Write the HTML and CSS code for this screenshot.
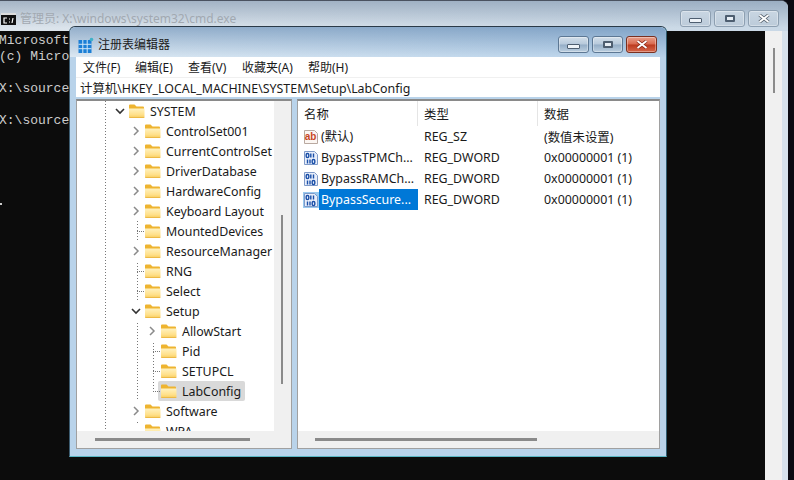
FILE: index.html
```html
<!DOCTYPE html>
<html lang="zh-CN">
<head>
<meta charset="utf-8">
<title>注册表编辑器</title>
<link rel="stylesheet" href="styles.css">
</head>
<body>
<svg class="defs" width="0" height="0" aria-hidden="true">
  <defs>
    <linearGradient id="fb" x1="0" y1="0" x2="0" y2="1">
      <stop offset="0" stop-color="#fff2c0"/>
      <stop offset=".65" stop-color="#ffe08a"/>
      <stop offset="1" stop-color="#f7cb5c"/>
    </linearGradient>
    <symbol id="folder" viewBox="0 0 17 16">
      <path d="M1 2.500q0-1 1-1h4.500l2 2h6.500q1 0 1 1V6H1z" fill="#eeb430"/>
      <path d="M1 5.500h15.500v8.500q0 1-1 1H2q-1 0-1-1z" fill="url(#fb)"/>
      <path d="M1 14.200h15.500v.1q0 .7-1 .7H2q-1 0-1-.7z" fill="#e9b33c"/>
    </symbol>
    <symbol id="chev-r" viewBox="0 0 16 20"><path d="M6 6l4 4-4 4" fill="none" stroke="#8a8a8a" stroke-width="1.500"/></symbol>
    <symbol id="chev-d" viewBox="0 0 16 20"><path d="M4 8l4 4 4-4" fill="none" stroke="#333" stroke-width="1.600"/></symbol>
    <symbol id="bin" viewBox="0 0 16 16">
      <path d="M1.500 1.500h10l3 3v10h-13z" fill="#e8eefa" stroke="#7f9ac8"/>
      <g fill="none" stroke="#1a4fa8" stroke-width="1.400">
        <rect x="3.200" y="3.500" width="2.600" height="4" rx="1.200"/>
        <path d="M7.800 3.500v4"/>
        <path d="M10.500 3.500v4"/>
        <path d="M4.500 9.500v4"/>
        <path d="M7 9.500v4"/>
        <rect x="9.200" y="9.500" width="2.600" height="4" rx="1.200"/>
      </g>
    </symbol>
  </defs>
</svg>

<section class="cmd">
  <header class="cmd-title">
    <svg class="cmd-icon" viewBox="0 0 15 12" width="15" height="12"><rect width="15" height="12" fill="#111"/><rect width="15" height="2" fill="#ddd"/><path d="M6 5H3v5h3M8 6h1M8 9h1M12 5l-1 5" fill="none" stroke="#fff" stroke-width="1.200"/></svg>
    <span class="cmd-caption">管理员: X:\windows\system32\cmd.exe</span>
    <div class="caps caps-cmd">
      <span class="cap"><i class="g-min"></i></span>
      <span class="cap"><i class="g-max"></i></span>
      <span class="cap"><svg class="g-x" viewBox="0 0 12 9" width="12" height="9"><path d="M1.500 1l9 7M10.500 1l-9 7" stroke="#55606c" stroke-width="3.400"/><path d="M1.500 1l9 7M10.500 1l-9 7" stroke="#fff" stroke-width="1.800"/></svg></span>
    </div>
  </header>
  <div class="cmd-body">
    <div class="console-wrap">
      <pre class="console">Microsoft
(c) Micro

X:\source

X:\source</pre>
      <i class="cursor"></i>
    </div>
    <div class="cmd-scroll"><span class="cmd-thumb"></span></div>
  </div>
</section>

<section class="reg">
  <header class="reg-title">
    <svg class="reg-icon" viewBox="0 0 16 16" width="16" height="16">
      <rect x="0.500" y="3" width="13" height="13" fill="#1b7fd6"/>
      <path d="M4.800 3v13M9.200 3v13M.5 7.300h13M.5 11.700h13" stroke="#cfe6f8" stroke-width="1"/>
      <circle cx="13.500" cy="2.500" r="1.800" fill="#3fb0c8"/>
    </svg>
    <span class="reg-caption">注册表编辑器</span>
    <div class="caps">
      <span class="cap"><i class="g-min"></i></span>
      <span class="cap"><i class="g-max"></i></span>
      <span class="cap cap-close"><svg class="g-x" viewBox="0 0 12 9" width="12" height="9"><path d="M1.500 1l9 7M10.500 1l-9 7" stroke="#8a2a18" stroke-width="3.400"/><path d="M1.500 1l9 7M10.500 1l-9 7" stroke="#fff" stroke-width="1.800"/></svg></span>
    </div>
  </header>
  <nav class="menu">
    <span class="m1">文件(F)</span><span class="m2">编辑(E)</span><span class="m3">查看(V)</span><span class="m4">收藏夹(A)</span><span>帮助(H)</span>
  </nav>
  <div class="address">计算机\HKEY_LOCAL_MACHINE\SYSTEM\Setup\LabConfig</div>
  <div class="panes">
    <div class="pane tree-pane">
      <div class="tree">
        <i class="guide g1"></i><i class="guide g2"></i><i class="guide g3"></i><i class="guide g4"></i>
        <div class="row l1"><svg class="tw"><use href="#chev-d"/></svg><span class="item"><svg class="fo"><use href="#folder"/></svg><span>SYSTEM</span></span></div>
        <div class="row l2"><svg class="tw"><use href="#chev-r"/></svg><span class="item"><svg class="fo"><use href="#folder"/></svg><span>ControlSet001</span></span></div>
        <div class="row l2"><svg class="tw"><use href="#chev-r"/></svg><span class="item"><svg class="fo"><use href="#folder"/></svg><span>CurrentControlSet</span></span></div>
        <div class="row l2"><svg class="tw"><use href="#chev-r"/></svg><span class="item"><svg class="fo"><use href="#folder"/></svg><span>DriverDatabase</span></span></div>
        <div class="row l2"><svg class="tw"><use href="#chev-r"/></svg><span class="item"><svg class="fo"><use href="#folder"/></svg><span>HardwareConfig</span></span></div>
        <div class="row l2"><svg class="tw"><use href="#chev-r"/></svg><span class="item"><svg class="fo"><use href="#folder"/></svg><span>Keyboard Layout</span></span></div>
        <div class="row l2"><span class="stub"></span><span class="item"><svg class="fo"><use href="#folder"/></svg><span>MountedDevices</span></span></div>
        <div class="row l2"><svg class="tw"><use href="#chev-r"/></svg><span class="item"><svg class="fo"><use href="#folder"/></svg><span>ResourceManager</span></span></div>
        <div class="row l2"><span class="stub"></span><span class="item"><svg class="fo"><use href="#folder"/></svg><span>RNG</span></span></div>
        <div class="row l2"><span class="stub"></span><span class="item"><svg class="fo"><use href="#folder"/></svg><span>Select</span></span></div>
        <div class="row l2"><svg class="tw"><use href="#chev-d"/></svg><span class="item"><svg class="fo"><use href="#folder"/></svg><span>Setup</span></span></div>
        <div class="row l3"><svg class="tw"><use href="#chev-r"/></svg><span class="item"><svg class="fo"><use href="#folder"/></svg><span>AllowStart</span></span></div>
        <div class="row l3"><span class="stub"></span><span class="item"><svg class="fo"><use href="#folder"/></svg><span>Pid</span></span></div>
        <div class="row l3"><span class="stub"></span><span class="item"><svg class="fo"><use href="#folder"/></svg><span>SETUPCL</span></span></div>
        <div class="row l3"><span class="stub"></span><span class="item item-sel"><svg class="fo"><use href="#folder"/></svg><span>LabConfig</span></span></div>
        <div class="row l2"><svg class="tw"><use href="#chev-r"/></svg><span class="item"><svg class="fo"><use href="#folder"/></svg><span>Software</span></span></div>
        <div class="row l2"><span class="stub"></span><span class="item"><svg class="fo"><use href="#folder"/></svg><span>WPA</span></span></div>
      </div>
      <div class="vscroll"><span class="vthumb"></span></div>
      <div class="hscroll"><span class="hthumb tree-thumb"></span></div>
      <div class="corner"></div>
    </div>
    <div class="pane list-pane">
      <div class="list">
        <div class="list-head"><span class="col-name">名称</span><span class="col-type">类型</span><span class="col-data">数据</span></div>
        <div class="list-row">
          <span class="col-name"><svg class="vi" viewBox="0 0 16 16" width="16" height="16"><path d="M1.500 1.500h10l3 3v10h-13z" fill="#fbf6f2" stroke="#b9a9a0"/><text x="1.800" y="11" class="ab">ab</text></svg><span class="vn">(默认)</span></span>
          <span class="col-type">REG_SZ</span><span class="col-data">(数值未设置)</span>
        </div>
        <div class="list-row">
          <span class="col-name"><svg class="vi"><use href="#bin"/></svg><span class="vn">BypassTPMCh...</span></span>
          <span class="col-type">REG_DWORD</span><span class="col-data">0x00000001 (1)</span>
        </div>
        <div class="list-row">
          <span class="col-name"><svg class="vi"><use href="#bin"/></svg><span class="vn">BypassRAMCh...</span></span>
          <span class="col-type">REG_DWORD</span><span class="col-data">0x00000001 (1)</span>
        </div>
        <div class="list-row">
          <span class="col-name"><svg class="vi vi-sel"><use href="#bin"/></svg><span class="vn vn-sel">BypassSecure...</span></span>
          <span class="col-type">REG_DWORD</span><span class="col-data">0x00000001 (1)</span>
        </div>
      </div>
      <div class="hscroll"><span class="hthumb list-thumb"></span></div>
    </div>
  </div>
</section>
</body>
</html>
```

FILE: styles.css
```css
html, body {
  margin: 0;
  height: 100%;
  overflow: hidden;
}
body {
  position: relative;
  width: 794px;
  height: 480px;
  background: #0a0a12;
  font-family: "Noto Sans", "Noto Sans CJK SC", sans-serif;
  font-size: 12.4px;
  color: #1a1a1a;
}
.defs { position: absolute; }

/* Desktop windows */
.cmd {
  position: absolute;
  left: -8px;
  top: 0;
  width: 796px;
  height: 500px;
  display: flex;
  flex-direction: column;
  border-top: 1px solid #4a5260;
  border-top-right-radius: 7px;
  background: #d6e1ec;
  box-sizing: border-box;
}
.cmd-title {
  height: 30px;
  display: flex;
  align-items: flex-start;
  padding: 0 9px;
  border-top-right-radius: 7px;
  background:
    linear-gradient(180deg, rgba(90, 115, 145, .42), rgba(255, 255, 255, 0) 90%),
    linear-gradient(90deg, #dde5ec, #c9d8e6);
  box-sizing: border-box;
}
.cmd-icon { margin: 12px 4px 0 0; flex: none; }
.cmd-caption {
  font-size: 12px;
  line-height: 12px;
  color: #a2a9b1;
  margin-top: 12px;
  white-space: nowrap;
}
.caps {
  margin-left: auto;
  display: flex;
  gap: 3px;
  align-self: flex-start;
  margin-top: 9px;
}
.cap {
  width: 31px;
  height: 17px;
  display: flex;
  align-items: center;
  justify-content: center;
  border: 1px solid #5d7894;
  border-radius: 3px;
  box-sizing: border-box;
  background: linear-gradient(180deg, #d3dfea 0%, #b7c9db 48%, #94adc6 52%, #bccfe0 100%);
  box-shadow: inset 0 0 0 1px rgba(255, 255, 255, .35);
}
.caps-cmd .cap {
  border-color: #8d9fb1;
  background: linear-gradient(180deg, #c9d6e2, #bccbda);
}
.cap-close {
  border-color: #7a3020;
  background: linear-gradient(180deg, #e8a08c 0%, #d9694e 48%, #bb3a1e 52%, #d5664a 100%);
}
.g-min {
  display: block;
  width: 11px;
  height: 3px;
  margin-top: 4px;
  background: #eef3f8;
  border: 1px solid #4e5e70;
  border-radius: 1px;
}
.g-max {
  display: block;
  width: 6px;
  height: 3px;
  background: #e6edf4;
  border: 2px solid #4e5e70;
  border-radius: 1px;
}
.g-x { display: block; }

.cmd-body {
  flex: 1;
  display: flex;
  padding-right: 6px;
  min-height: 0;
}
.console-wrap {
  flex: 1;
  position: relative;
  background: #0c0c0c;
  overflow: hidden;
}
.console {
  margin: 0;
  padding: 2px 0 0 7px;
  color: #cccccc;
  font-family: "Liberation Mono", monospace;
  font-size: 13px;
  line-height: 16px;
}
.cursor {
  position: absolute;
  left: 8px;
  top: 172px;
  width: 2px;
  height: 2px;
  background: #cccccc;
}
.cmd-scroll {
  width: 17px;
  background: #f0f0f0;
  flex: none;
}
.cmd-thumb {
  display: block;
  width: 2px;
  height: 45px;
  margin: 17px 0 0 8px;
  background: #8b8b8b;
}

.reg {
  position: absolute;
  left: 69px;
  top: 26px;
  width: 598px;
  height: 431px;
  display: flex;
  flex-direction: column;
  padding: 0 6px 7px;
  box-sizing: border-box;
  background: #b9d3ea;
  border-top: 1px solid #2a3a48;
  border-left: 1px solid #3d5c70;
  border-right: 1px solid #2f5c70;
  border-bottom: 1px solid #5ab6c4;
  border-radius: 6px 6px 0 0;
}
.reg-title {
  height: 30px;
  flex: none;
  margin: 0 -6px;
  padding: 0 9px 0 8px;
  display: flex;
  align-items: flex-start;
  box-sizing: border-box;
  border-radius: 6px 6px 0 0;
  background:
    linear-gradient(180deg, rgba(60, 105, 155, .45), rgba(255, 255, 255, 0)),
    linear-gradient(90deg, #dce8f2, #b8d2ea);
}
.reg-title .caps { margin-top: 9px; }
.reg-icon { margin: 10px 4px 0 0; flex: none; }
.reg-caption {
  font-size: 12px;
  line-height: 16px;
  margin-top: 10px;
  color: #202020;
}
.menu {
  height: 20px;
  flex: none;
  display: flex;
  align-items: center;
  padding-left: 7px;
  background: #fff;
  font-size: 12px;
}
.menu span { white-space: nowrap; }
.m1 { width: 52px; }
.m2 { width: 53px; }
.m3 { width: 54px; }
.m4 { width: 66px; }
.address {
  height: 20px;
  flex: none;
  display: flex;
  align-items: center;
  padding-left: 4px;
  margin-bottom: 2px;
  background: #fff;
  border-top: 1px solid #f0f0f0;
  box-sizing: border-box;
  white-space: nowrap;
}
.panes {
  flex: 1;
  display: flex;
  gap: 5px;
  min-height: 0;
}
.pane {
  background: #fff;
  border: 1px solid #a0a0a0;
  border-top: 2px solid #8a8a8a;
  box-sizing: border-box;
  min-width: 0;
}
.tree-pane {
  width: 216px;
  flex: none;
  display: grid;
  grid-template-columns: 1fr 17px;
  grid-template-rows: 1fr 17px;
}
.list-pane {
  flex: 1;
  display: flex;
  flex-direction: column;
}

/* Tree */
.tree {
  position: relative;
  overflow: hidden;
  min-height: 0;
}
.guide {
  position: absolute;
  width: 1px;
  background: repeating-linear-gradient(180deg, #777 0 1px, transparent 1px 3px);
}
.g1 { left: 28px; top: 0; bottom: 0; }
.g2 { left: 44px; top: 0; height: 9px; }
.g3 { left: 60px; top: 21px; bottom: 6px; }
.g4 { left: 76px; top: 221px; height: 70px; }
.row {
  position: relative;
  height: 20px;
  display: flex;
  align-items: center;
  white-space: nowrap;
}
.l1 { padding-left: 35px; }
.l2 { padding-left: 51px; }
.l3 { padding-left: 67px; }
.tw {
  width: 16px;
  height: 20px;
  flex: none;
  background: #fff;
}
.stub {
  width: 16px;
  height: 0;
  flex: none;
  box-sizing: border-box;
  border-top: 1px dotted #777;
  clip-path: inset(-1px 0 -1px 9px);
}
.item {
  display: flex;
  align-items: center;
  height: 20px;
  gap: 5px;
  padding-right: 4px;
}
.item-sel {
  background: #d9d9d9;
  border-radius: 2px;
  margin-left: -2px;
  padding-left: 2px;
}
.fo {
  width: 17px;
  height: 16px;
  flex: none;
}
.vscroll {
  background: #f0f0f0;
  padding-top: 114px;
  min-height: 0;
}
.vthumb {
  display: block;
  width: 2px;
  height: 169px;
  margin-left: 7px;
  background: #8a8a8a;
}
.hscroll {
  height: 17px;
  flex: none;
  display: flex;
  align-items: center;
  background: #f0f0f0;
}
.hthumb {
  display: block;
  height: 3px;
  background: #8a8a8a;
}
.tree-thumb { width: 155px; margin-left: 18px; }
.list-thumb { width: 222px; margin-left: 17px; }
.corner { background: #f0f0f0; }

/* List */
.list {
  flex: 1;
  min-height: 0;
  padding-left: 5px;
}
.list-head, .list-row {
  display: flex;
  align-items: center;
  white-space: nowrap;
}
.list-head {
  height: 25px;
  margin-left: -5px;
  padding-left: 5px;
  margin-bottom: 0;
}
.list-head .col-name { padding-left: 1px; }
.list-row { height: 21px; }
.col-name {
  width: 115px;
  height: 100%;
  display: flex;
  align-items: center;
  box-sizing: border-box;
  flex: none;
}
.col-type {
  width: 120px;
  padding-left: 6px;
  box-sizing: border-box;
  flex: none;
}
.list-head .col-name {
  border-right: 1px solid #e5e5e5;
}
.list-head .col-type {
  height: 100%;
  display: flex;
  align-items: center;
  border-right: 1px solid #e5e5e5;
}
.col-data { padding-left: 6px; }
.vi {
  width: 16px;
  height: 16px;
  flex: none;
}
.vi-sel { background: rgba(0, 120, 215, .4); }
.ab {
  font-family: "Liberation Sans", sans-serif;
  font-size: 10px;
  font-weight: 700;
  fill: #c8451f;
}
.vn {
  margin-left: 1px;
  height: 21px;
  line-height: 21px;
  padding-left: 1px;
  box-sizing: border-box;
}
.vn-sel {
  margin-left: 0;
  padding-left: 2px;
  width: 99px;
  background: #0078d7;
  color: #fff;
}
```
